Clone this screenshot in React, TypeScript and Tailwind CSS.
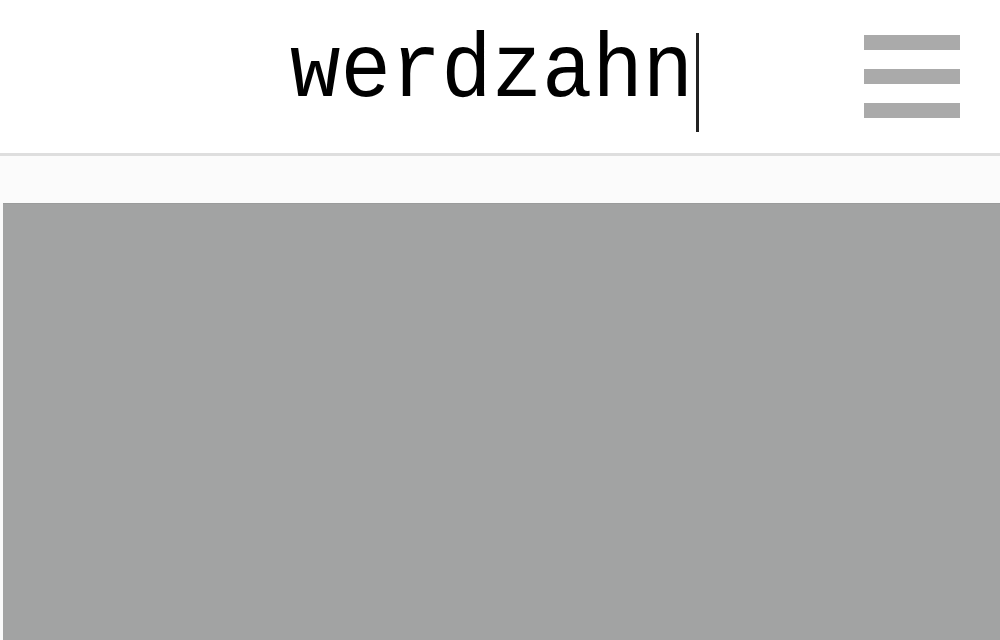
import React from "react";

export default function App() {
  return (
    <div className="w-[1000px] h-[640px] flex flex-col bg-[#fafafa] overflow-hidden">
      <div className="h-[153px] shrink-0 bg-white flex items-center border-b-[3px] border-[#dedede] box-content">
        <div className="pl-[290px] flex items-center">
          <span
            className="text-[84px] leading-none text-black scale-y-[1.08] -mt-[10px]"
            style={{ fontFamily: '"Liberation Mono", "Courier New", monospace' }}
          >
            werdzahn
          </span>
          <span className="w-[3px] h-[99px] bg-[#222] ml-[3px] mt-[12px]" />
        </div>
        <div className="ml-auto mr-[40px] flex flex-col gap-[19px]">
          <div className="w-[96px] h-[15px] bg-[#aaaaaa]" />
          <div className="w-[96px] h-[15px] bg-[#aaaaaa]" />
          <div className="w-[96px] h-[15px] bg-[#aaaaaa]" />
        </div>
      </div>
      <div className="h-[47px] shrink-0 bg-[#fbfbfb]" />
      <div className="flex-1 ml-[3px] bg-[#a2a3a3] border-t border-[#9a9b9b]" />
    </div>
  );
}
